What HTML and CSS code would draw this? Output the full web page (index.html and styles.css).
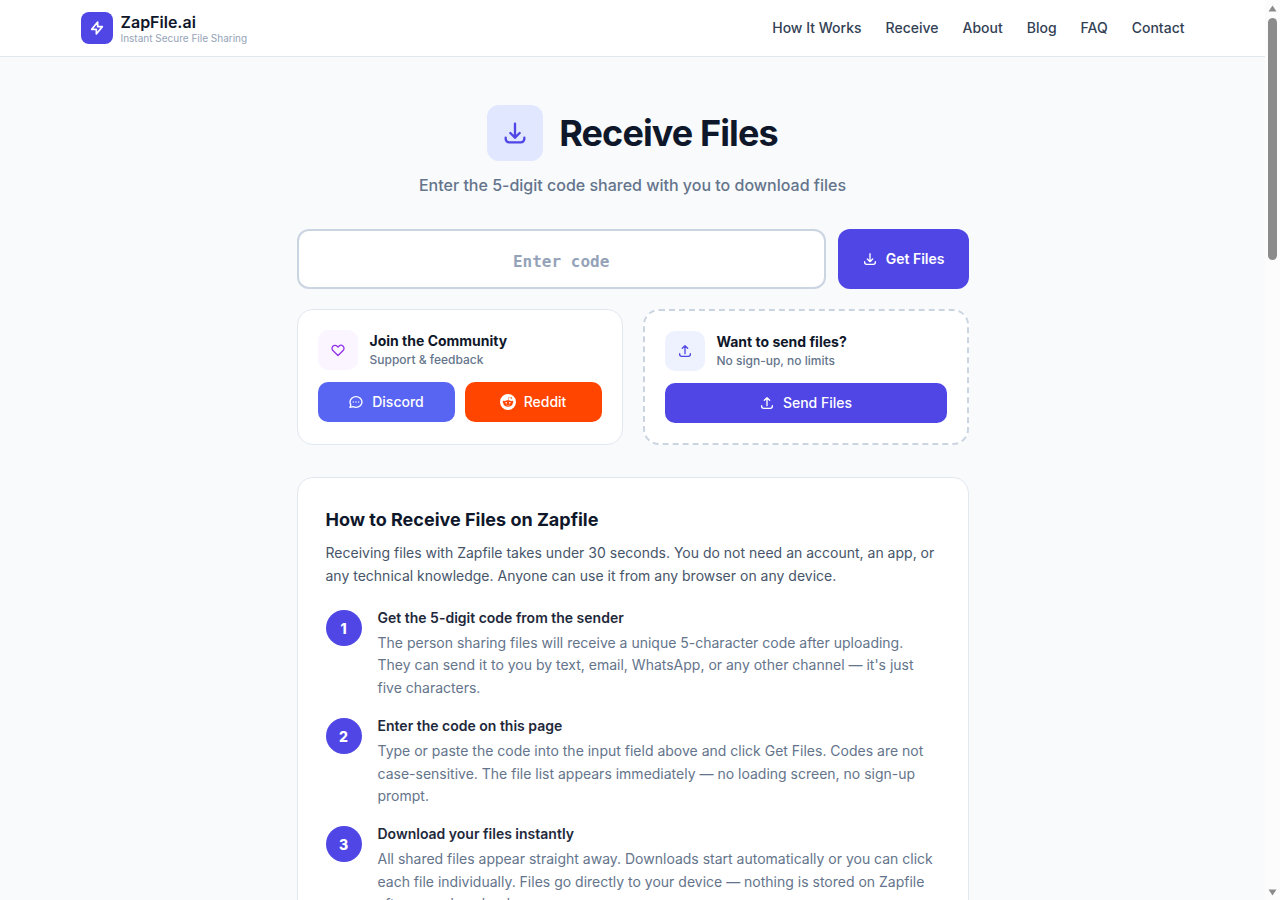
FILE: index.html
```html
<!DOCTYPE html>
<html lang="en">
<head>
    <meta charset="UTF-8">
    <meta name="viewport" content="width=device-width, initial-scale=1.0">
    <title>Receive Files - ZapFile.ai</title>
    <link rel="stylesheet" href="styles.css">
</head>
<body>
    <div class="page">
        <header class="site-header">
            <div class="header-inner">
                <a class="brand" href="#">
                    <span class="brand-logo">
                        <svg class="icon" viewBox="0 0 24 24"><path d="M13 10V3L4 14h7v7l9-11h-7z"/></svg>
                    </span>
                    <span class="brand-text">
                        <span class="brand-name">ZapFile.ai</span>
                        <span class="brand-tagline">Instant Secure File Sharing</span>
                    </span>
                </a>
                <nav class="site-nav">
                    <a href="#how">How It Works</a>
                    <a href="#receive">Receive</a>
                    <a href="#about">About</a>
                    <a href="#blog">Blog</a>
                    <a href="#faq">FAQ</a>
                    <a href="#contact">Contact</a>
                </nav>
            </div>
        </header>

        <main class="content">
            <div class="hero">
                <span class="hero-icon">
                    <svg class="icon" viewBox="0 0 24 24"><path d="M4 16v1a3 3 0 003 3h10a3 3 0 003-3v-1m-4-4l-4 4m0 0l-4-4m4 4V4"/></svg>
                </span>
                <h1>Receive Files</h1>
            </div>
            <p class="subtitle">Enter the 5-digit code shared with you to download files</p>

            <form class="code-form" id="receive">
                <input type="text" class="code-input" placeholder="Enter code" maxlength="5" aria-label="Enter code">
                <button type="submit" class="btn btn-get">
                    <svg class="icon" viewBox="0 0 24 24"><path d="M4 16v1a3 3 0 003 3h10a3 3 0 003-3v-1m-4-4l-4 4m0 0l-4-4m4 4V4"/></svg>
                    Get Files
                </button>
            </form>

            <div class="cards">
                <section class="card">
                    <div class="card-head">
                        <span class="card-icon card-icon-heart">
                            <svg class="icon" viewBox="0 0 24 24"><path d="M4.318 6.318a4.5 4.5 0 000 6.364L12 20.364l7.682-7.682a4.5 4.5 0 00-6.364-6.364L12 7.636l-1.318-1.318a4.5 4.5 0 00-6.364 0z"/></svg>
                        </span>
                        <div>
                            <h2>Join the Community</h2>
                            <p>Support &amp; feedback</p>
                        </div>
                    </div>
                    <div class="card-actions">
                        <a class="btn btn-discord" href="#discord">
                            <svg class="icon" viewBox="0 0 24 24"><path d="M8 12h.01M12 12h.01M16 12h.01M21 12c0 4.418-4.03 8-9 8a9.863 9.863 0 01-4.255-.949L3 20l1.395-3.72C3.512 15.042 3 13.574 3 12c0-4.418 4.03-8 9-8s9 3.582 9 8z"/></svg>
                            Discord
                        </a>
                        <a class="btn btn-reddit" href="#reddit">
                            <svg class="icon-solid" viewBox="0 0 24 24"><path d="M12 0A12 12 0 0 0 0 12a12 12 0 0 0 12 12 12 12 0 0 0 12-12A12 12 0 0 0 12 0zm5.01 4.744c.688 0 1.25.561 1.25 1.249a1.25 1.25 0 0 1-2.498.056l-2.597-.547-.8 3.747c1.824.07 3.48.632 4.674 1.488.308-.309.73-.491 1.207-.491.968 0 1.754.786 1.754 1.754 0 .716-.435 1.333-1.01 1.614a3.111 3.111 0 0 1 .042.52c0 2.694-3.13 4.87-7.004 4.87-3.874 0-7.004-2.176-7.004-4.87 0-.183.015-.366.043-.534A1.748 1.748 0 0 1 4.028 12c0-.968.786-1.754 1.754-1.754.463 0 .898.196 1.207.49 1.207-.883 2.878-1.43 4.744-1.487l.885-4.182a.342.342 0 0 1 .14-.197.35.35 0 0 1 .238-.042l2.906.617a1.214 1.214 0 0 1 1.108-.701zM9.25 12C8.561 12 8 12.562 8 13.25c0 .687.561 1.248 1.25 1.248.687 0 1.248-.561 1.248-1.249 0-.688-.561-1.249-1.249-1.249zm5.5 0c-.687 0-1.248.561-1.248 1.25 0 .687.561 1.248 1.249 1.248.688 0 1.249-.561 1.249-1.249 0-.687-.562-1.249-1.25-1.249zm-5.466 3.99a.327.327 0 0 0-.231.094.33.33 0 0 0 0 .463c.842.842 2.484.913 2.961.913.477 0 2.105-.056 2.961-.913a.361.361 0 0 0 .029-.463.33.33 0 0 0-.464 0c-.547.533-1.684.73-2.512.73-.828 0-1.979-.196-2.512-.73a.326.326 0 0 0-.232-.095z"/></svg>
                            Reddit
                        </a>
                    </div>
                </section>

                <section class="card card-dashed">
                    <div class="card-head">
                        <span class="card-icon card-icon-send">
                            <svg class="icon" viewBox="0 0 24 24"><path d="M4 16v1a3 3 0 003 3h10a3 3 0 003-3v-1m-4-8l-4-4m0 0L8 8m4-4v12"/></svg>
                        </span>
                        <div>
                            <h2>Want to send files?</h2>
                            <p>No sign-up, no limits</p>
                        </div>
                    </div>
                    <div class="card-actions">
                        <a class="btn btn-send" href="#send">
                            <svg class="icon" viewBox="0 0 24 24"><path d="M4 16v1a3 3 0 003 3h10a3 3 0 003-3v-1m-4-8l-4-4m0 0L8 8m4-4v12"/></svg>
                            Send Files
                        </a>
                    </div>
                </section>
            </div>

            <section class="guide" id="how">
                <h2>How to Receive Files on Zapfile</h2>
                <p class="guide-intro">Receiving files with Zapfile takes under 30 seconds. You do not need an account, an app, or any technical knowledge. Anyone can use it from any browser on any device.</p>
                <div class="steps">
                    <div class="step">
                        <span class="step-number">1</span>
                        <div>
                            <h3>Get the 5-digit code from the sender</h3>
                            <p>The person sharing files will receive a unique 5-character code after uploading. They can send it to you by text, email, WhatsApp, or any other channel — it's just five characters.</p>
                        </div>
                    </div>
                    <div class="step">
                        <span class="step-number">2</span>
                        <div>
                            <h3>Enter the code on this page</h3>
                            <p>Type or paste the code into the input field above and click Get Files. Codes are not case-sensitive. The file list appears immediately — no loading screen, no sign-up prompt.</p>
                        </div>
                    </div>
                    <div class="step">
                        <span class="step-number">3</span>
                        <div>
                            <h3>Download your files instantly</h3>
                            <p>All shared files appear straight away. Downloads start automatically or you can click each file individually. Files go directly to your device — nothing is stored on Zapfile after your download.</p>
                        </div>
                    </div>
                </div>
            </section>
        </main>
    </div>

    <div class="scrollbar" aria-hidden="true">
        <svg class="scroll-arrow" viewBox="0 0 9 7"><path d="M4.500 0.500L8.500 6.500H0.500z"/></svg>
        <div class="scroll-track"><div class="scroll-thumb"></div></div>
        <svg class="scroll-arrow" viewBox="0 0 9 7"><path d="M4.500 6.500L8.500 0.500H0.500z"/></svg>
    </div>
</body>
</html>
```

FILE: styles.css
```css
* {
    box-sizing: border-box;
    margin: 0;
    padding: 0;
}
body {
    display: grid;
    grid-template-columns: 1fr 15px;
    height: 100vh;
    overflow: hidden;
    font-family: Inter, "Liberation Sans", sans-serif;
    font-size: 14px;
    color: #0f172a;
    background-color: #f8fafc;
}
a {
    text-decoration: none;
    color: inherit;
}
.page {
    min-width: 0;
    overflow-y: auto;
    scrollbar-width: none;
    background-color: #f8fafc;
}
.icon {
    width: 16px;
    height: 16px;
    flex-shrink: 0;
    fill: none;
    stroke: currentColor;
    stroke-width: 2;
    stroke-linecap: round;
    stroke-linejoin: round;
}
.icon-solid {
    width: 16px;
    height: 16px;
    flex-shrink: 0;
    fill: currentColor;
}

/* header */
.site-header {
    position: sticky;
    top: 0;
    z-index: 10;
    background-color: #fff;
    border-bottom: 1px solid #e2e8f0;
}
.header-inner {
    display: flex;
    align-items: center;
    justify-content: space-between;
    max-width: 1152px;
    height: 56px;
    margin: 0 auto;
    padding: 0 24px;
}
.brand {
    display: flex;
    align-items: center;
    gap: 8px;
}
.brand-logo {
    display: flex;
    align-items: center;
    justify-content: center;
    width: 32px;
    height: 32px;
    border-radius: 8px;
    color: #fff;
    background-color: #4f46e5;
}
.brand-logo .icon {
    stroke-width: 2.5;
}
.brand-text {
    display: flex;
    flex-direction: column;
}
.brand-name {
    font-size: 16px;
    font-weight: 600;
    line-height: 20px;
}
.brand-tagline {
    font-size: 10px;
    line-height: 12px;
    color: #94a3b8;
}
.site-nav {
    display: flex;
    gap: 24px;
    font-weight: 500;
    line-height: 20px;
    color: #334155;
}
.site-nav a:hover {
    color: #4f46e5;
}

/* title */
.content {
    max-width: 720px;
    margin: 0 auto;
    padding: 48px 24px;
}
.hero {
    display: flex;
    align-items: center;
    justify-content: center;
    gap: 16px;
}
.hero-icon {
    display: flex;
    align-items: center;
    justify-content: center;
    width: 56px;
    height: 56px;
    border-radius: 12px;
    color: #4f46e5;
    background-color: #e0e7ff;
}
.hero-icon .icon {
    width: 28px;
    height: 28px;
}
h1 {
    font-size: 36px;
    font-weight: 700;
    line-height: 40px;
    letter-spacing: -0.025em;
}
.subtitle {
    margin-top: 12px;
    font-size: 16px;
    font-weight: 500;
    line-height: 24px;
    text-align: center;
    color: #64748b;
}

/* code form */
.code-form {
    display: flex;
    gap: 12px;
    margin-top: 32px;
}
.code-input {
    flex: 1;
    min-width: 0;
    height: 60px;
    padding: 0 16px;
    border: 2px solid #cbd5e1;
    border-radius: 12px;
    font-family: "DejaVu Sans Mono", monospace;
    font-size: 24px;
    font-weight: 700;
    text-align: center;
    color: #0f172a;
    background-color: #fff;
    outline: none;
}
.code-input::placeholder {
    font-size: 16px;
    color: #94a3b8;
}
.code-input:focus {
    border-color: #4f46e5;
}
.btn {
    display: flex;
    flex: 1;
    align-items: center;
    justify-content: center;
    gap: 8px;
    height: 40px;
    border: none;
    border-radius: 10px;
    font-family: inherit;
    font-size: 14px;
    font-weight: 500;
    line-height: 20px;
    color: #fff;
    background-color: #4f46e5;
    cursor: pointer;
}
.btn-get {
    flex: none;
    height: 60px;
    padding: 0 24px;
    border-radius: 12px;
    font-weight: 600;
}
.btn-discord {
    background-color: #5865f2;
}
.btn-reddit {
    background-color: #ff4500;
}

/* cards */
.cards {
    display: grid;
    grid-template-columns: 1fr 1fr;
    gap: 20px;
    margin-top: 20px;
}
.card {
    padding: 20px;
    border: 1px solid #e2e8f0;
    border-radius: 16px;
    background-color: #fff;
}
.card-dashed {
    border: 2px dashed #cbd5e1;
}
.card-head {
    display: flex;
    align-items: center;
    gap: 12px;
}
.card-head h2 {
    font-size: 14px;
    font-weight: 700;
    line-height: 18px;
}
.card-head p {
    margin-top: 2px;
    font-size: 12px;
    font-weight: 500;
    line-height: 16px;
    color: #64748b;
}
.card-icon {
    display: flex;
    align-items: center;
    justify-content: center;
    width: 40px;
    height: 40px;
    border-radius: 10px;
}
.card-icon-heart {
    color: #9333ea;
    background-color: #faf5ff;
}
.card-icon-send {
    color: #4f46e5;
    background-color: #eef2ff;
}
.card-actions {
    display: flex;
    gap: 10px;
    margin-top: 12px;
}

/* guide */
.guide {
    margin-top: 32px;
    padding: 28px;
    border: 1px solid #e2e8f0;
    border-radius: 16px;
    background-color: #fff;
}
.guide h2 {
    font-size: 18px;
    font-weight: 700;
    line-height: 27px;
}
.guide-intro {
    margin-top: 8px;
    line-height: 23px;
    color: #475569;
}
.steps {
    display: flex;
    flex-direction: column;
    gap: 19px;
    margin-top: 23px;
}
.step {
    display: flex;
    gap: 16px;
}
.step-number {
    display: flex;
    align-items: center;
    justify-content: center;
    flex-shrink: 0;
    width: 36px;
    height: 36px;
    border-radius: 50%;
    font-weight: 800;
    color: #fff;
    background-color: #4f46e5;
}
.step h3 {
    font-size: 14px;
    font-weight: 600;
    line-height: 16px;
    color: #1e293b;
}
.step p {
    margin-top: 6px;
    line-height: 1.6;
    color: #64748b;
}

/* scrollbar */
.scrollbar {
    display: flex;
    flex-direction: column;
    align-items: center;
    gap: 6px;
    padding: 5px 0 4px;
    background-color: #fcfcfc;
}
.scroll-arrow {
    width: 9px;
    height: 7px;
    fill: #8b8b8b;
}
.scroll-track {
    flex: 1;
    width: 9px;
}
.scroll-thumb {
    height: 28%;
    border-radius: 5px;
    background-color: #8b8b8b;
}
@media (max-width: 640px) {
    .site-nav {
        display: none;
    }
    .cards {
        grid-template-columns: 1fr;
    }
}
```
